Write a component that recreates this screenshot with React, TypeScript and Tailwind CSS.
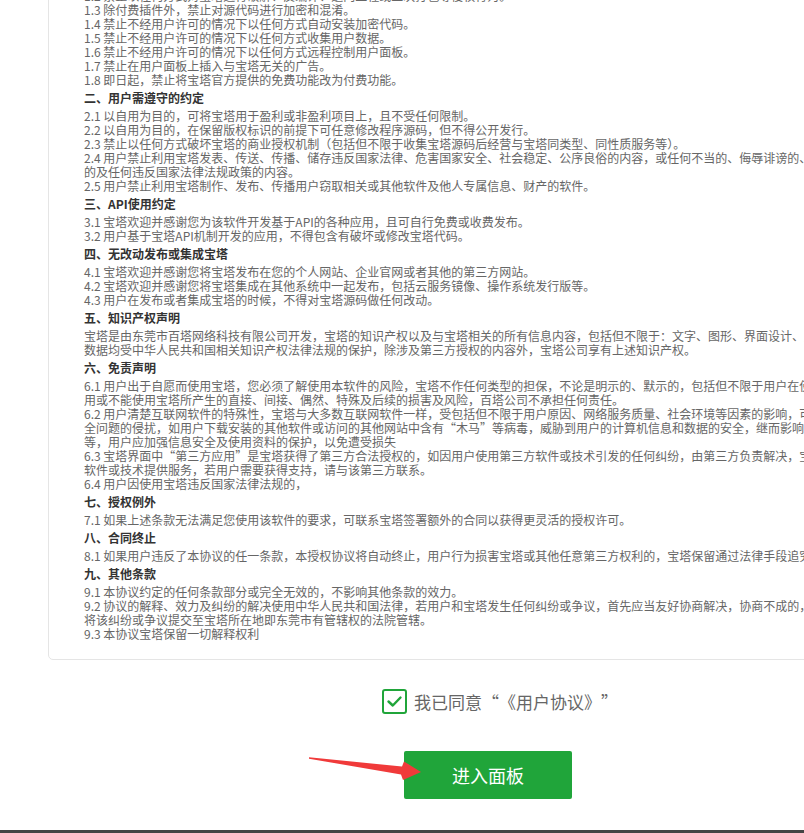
import React from "react";

type Line = { h?: boolean; t: string };

// agreement body, one entry per rendered line (the box is wider than the window)
const LINES: Line[] = [
  { t: "1.2 禁止以任何方式对宝塔进行破解、反编译、逆向工程或二次打包等侵权行为。" },
  { t: "1.3 除付费插件外，禁止对源代码进行加密和混淆。" },
  { t: "1.4 禁止不经用户许可的情况下以任何方式自动安装加密代码。" },
  { t: "1.5 禁止不经用户许可的情况下以任何方式收集用户数据。" },
  { t: "1.6 禁止不经用户许可的情况下以任何方式远程控制用户面板。" },
  { t: "1.7 禁止在用户面板上插入与宝塔无关的广告。" },
  { t: "1.8 即日起，禁止将宝塔官方提供的免费功能改为付费功能。" },
  { h: true, t: "二、用户需遵守的约定" },
  { t: "2.1 以自用为目的，可将宝塔用于盈利或非盈利项目上，且不受任何限制。" },
  { t: "2.2 以自用为目的，在保留版权标识的前提下可任意修改程序源码，但不得公开发行。" },
  { t: "2.3 禁止以任何方式破坏宝塔的商业授权机制（包括但不限于收集宝塔源码后经营与宝塔同类型、同性质服务等）。" },
  { t: "2.4 用户禁止利用宝塔发表、传送、传播、储存违反国家法律、危害国家安全、社会稳定、公序良俗的内容，或任何不当的、侮辱诽谤的、淫秽的、暴力" },
  { t: "的及任何违反国家法律法规政策的内容。" },
  { t: "2.5 用户禁止利用宝塔制作、发布、传播用户窃取相关或其他软件及他人专属信息、财产的软件。" },
  { h: true, t: "三、API使用约定" },
  { t: "3.1 宝塔欢迎并感谢您为该软件开发基于API的各种应用，且可自行免费或收费发布。" },
  { t: "3.2 用户基于宝塔API机制开发的应用，不得包含有破坏或修改宝塔代码。" },
  { h: true, t: "四、无改动发布或集成宝塔" },
  { t: "4.1 宝塔欢迎并感谢您将宝塔发布在您的个人网站、企业官网或者其他的第三方网站。" },
  { t: "4.2 宝塔欢迎并感谢您将宝塔集成在其他系统中一起发布，包括云服务镜像、操作系统发行版等。" },
  { t: "4.3 用户在发布或者集成宝塔的时候，不得对宝塔源码做任何改动。" },
  { h: true, t: "五、知识产权声明" },
  { t: "宝塔是由东莞市百塔网络科技有限公司开发，宝塔的知识产权以及与宝塔相关的所有信息内容，包括但不限于：文字、图形、界面设计、版面框架、有关" },
  { t: "数据均受中华人民共和国相关知识产权法律法规的保护，除涉及第三方授权的内容外，宝塔公司享有上述知识产权。" },
  { h: true, t: "六、免责声明" },
  { t: "6.1 用户出于自愿而使用宝塔，您必须了解使用本软件的风险，宝塔不作任何类型的担保，不论是明示的、默示的，包括但不限于用户在使用宝塔时因使" },
  { t: "用或不能使用宝塔所产生的直接、间接、偶然、特殊及后续的损害及风险，百塔公司不承担任何责任。" },
  { t: "6.2 用户清楚互联网软件的特殊性，宝塔与大多数互联网软件一样，受包括但不限于用户原因、网络服务质量、社会环境等因素的影响，可能受到各种安" },
  { t: "全问题的侵扰，如用户下载安装的其他软件或访问的其他网站中含有“木马”等病毒，威胁到用户的计算机信息和数据的安全，继而影响宝塔的正常使用" },
  { t: "等，用户应加强信息安全及使用资料的保护，以免遭受损失" },
  { t: "6.3 宝塔界面中“第三方应用”是宝塔获得了第三方合法授权的，如因用户使用第三方软件或技术引发的任何纠纷，由第三方负责解决，宝塔不对第三方" },
  { t: "软件或技术提供服务，若用户需要获得支持，请与该第三方联系。" },
  { t: "6.4 用户因使用宝塔违反国家法律法规的，" },
  { h: true, t: "七、授权例外" },
  { t: "7.1 如果上述条款无法满足您使用该软件的要求，可联系宝塔签署额外的合同以获得更灵活的授权许可。" },
  { h: true, t: "八、合同终止" },
  { t: "8.1 如果用户违反了本协议的任一条款，本授权协议将自动终止，用户行为损害宝塔或其他任意第三方权利的，宝塔保留通过法律手段追究责任的权利。" },
  { h: true, t: "九、其他条款" },
  { t: "9.1 本协议约定的任何条款部分或完全无效的，不影响其他条款的效力。" },
  { t: "9.2 协议的解释、效力及纠纷的解决使用中华人民共和国法律，若用户和宝塔发生任何纠纷或争议，首先应当友好协商解决，协商不成的，" },
  { t: "将该纠纷或争议提交至宝塔所在地即东莞市有管辖权的法院管辖。" },
  { t: "9.3 本协议宝塔保留一切解释权利" },
];

export default function App() {
  return (
    <div
      className="relative flex h-[833px] w-[804px] flex-col overflow-hidden bg-white"
      style={{ fontFamily: "'Microsoft YaHei', 'Noto Sans CJK SC', 'Noto Sans', sans-serif" }}
    >
      <div className="flex w-[976px] flex-col items-center">
        {/* agreement box, scrolled so its top is out of view */}
        <div className="-mt-[12px] ml-[48px] w-[880px] self-start rounded-[5px] border border-[#e5e5e5] pb-[18px] pl-[35px]">
          {LINES.map((l, i) =>
            l.h ? (
              <div key={i} className="whitespace-nowrap text-[12px] font-bold leading-[22px] text-[#333]">
                {l.t}
              </div>
            ) : (
              <div key={i} className="whitespace-nowrap text-[12px] leading-[14px] text-[#666]">
                {l.t}
              </div>
            )
          )}
        </div>

        {/* agree checkbox */}
        <label className="ml-[24px] mt-[29px] flex cursor-pointer items-center gap-[7px]">
          <span className="flex h-[25px] w-[25px] items-center justify-center rounded-[3px] border-2 border-[#20a53a] bg-white">
            <svg width="17" height="17" viewBox="0 0 17 17" fill="none">
              <path d="M2.5 8.5 L6.8 12.5 L14.5 4.5" stroke="#20a53a" strokeWidth="2.4" strokeLinecap="round" strokeLinejoin="round" />
            </svg>
          </span>
          <span className="whitespace-nowrap text-[17px] leading-[25px] text-[#666]">
            我已同意<span className="inline-block w-[17px] text-right">“</span>《用户协议》<span className="inline-block w-[17px] text-left">”</span>
          </span>
        </label>

        <button className="mt-[37px] h-[48px] w-[168px] rounded-[2px] bg-[#20a53a] text-[18px] text-white">
          进入面板
        </button>
      </div>

      <div className="mt-auto h-[3px] w-full bg-[#444]" />

      {/* red annotation arrow */}
      <svg className="pointer-events-none absolute left-0 top-0" width="804" height="833" viewBox="0 0 804 833">
        <polygon
          points="309,757.3 402,766.5 404,761.5 421,772 403,780 401,774.5 309,758.7"
          fill="#f03a3a"
        />
      </svg>
    </div>
  );
}
